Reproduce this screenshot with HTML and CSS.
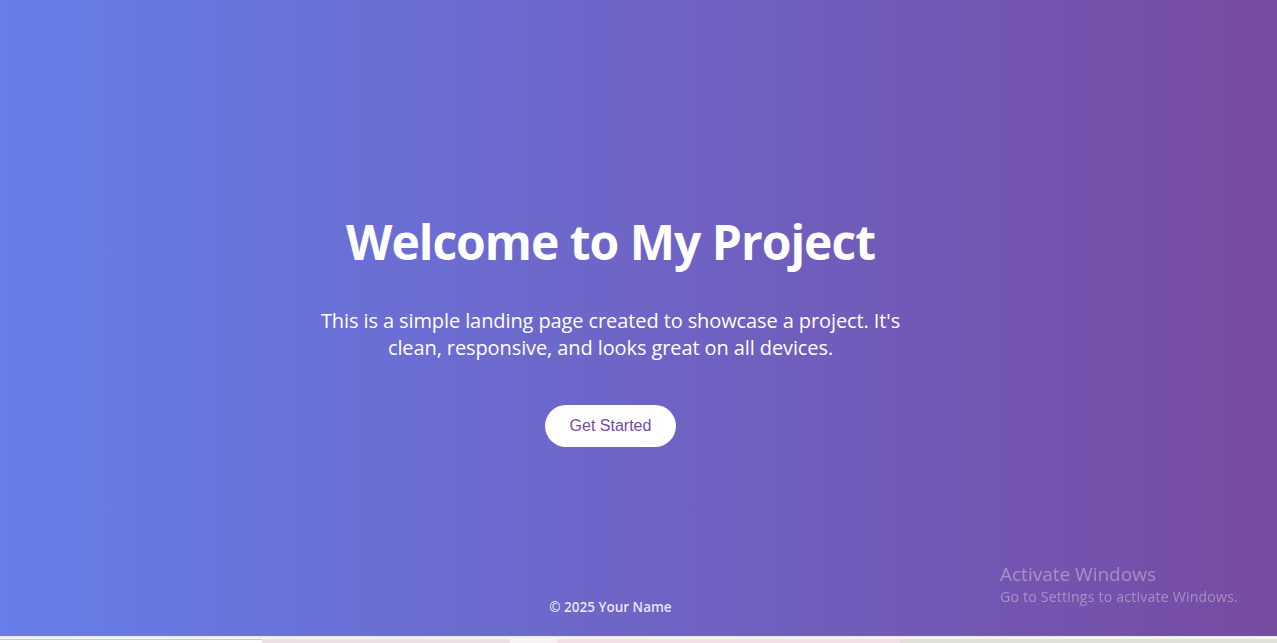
FILE: index.html
```html
<!DOCTYPE html>
<html lang="en">
<head>
<meta charset="utf-8">
<title>My Project</title>
<link rel="stylesheet" href="styles.css">
</head>
<body>
  <div class="page">
    <main class="hero">
      <h1 class="hero-title">Welcome to My Project</h1>
      <p class="hero-text">This is a simple landing page created to showcase a project. It's clean, responsive, and looks great on all devices.</p>
      <a class="hero-btn" href="#">Get Started</a>
    </main>
    <footer class="footer">© 2025 Your Name</footer>
  </div>
  <div class="taskbar">
    <span class="tb-a"></span><span class="tb-b"></span><span class="tb-c"></span><span class="tb-d"></span><span class="tb-e"></span>
  </div>
  <div class="activate">
    <div class="activate-title">Activate Windows</div>
    <div class="activate-sub">Go to Settings to activate Windows.</div>
  </div>
</body>
</html>
```

FILE: styles.css
```css
* { box-sizing: border-box; }
html, body { margin: 0; padding: 0; }
body {
  font-family: "Open Sans", "Noto Sans", sans-serif;
  color: #fff;
  background: #f3f3f3;
  height: 643px;
  overflow: hidden;
}
.page {
  height: 636px;
  background: linear-gradient(to right, #667eea, #764ba2);
  display: flex;
  flex-direction: column;
  padding-right: 56px;
}
.hero {
  flex: 1;
  display: flex;
  flex-direction: column;
  align-items: center;
  justify-content: center;
  text-align: center;
  padding-top: 58px;
}
.hero-title {
  margin: 0 0 33px;
  font-size: 48px;
  font-weight: 700;
  line-height: 64px;
  letter-spacing: -1px;
}
.hero-text {
  margin: 0 0 44px;
  max-width: 600px;
  font-size: 20px;
  line-height: 27px;
  letter-spacing: -0.1px;
}
.hero-btn {
  display: inline-block;
  background: #fff;
  color: #764ba2;
  font-family: "Liberation Sans", Arial, sans-serif;
  font-size: 16px;
  line-height: 18px;
  padding: 12px 25px;
  border-radius: 30px;
  text-decoration: none;
}
.footer {
  text-align: center;
  font-size: 13.5px;
  font-weight: 600;
  color: rgba(255,255,255,0.85);
  padding: 0 0 20px;
}
.taskbar {
  height: 7px;
  border-top: 2px solid #ececec;
  background: #fafafa;
  display: flex;
  align-items: flex-end;
}
.taskbar span { display: block; height: 4px; }
.tb-a { width: 262px; background: #fff; border-top: 1px solid #c8c8c8; }
.tb-b { width: 248px; background: #eedfe2; }
.tb-c { width: 47px; background: #f7f1f3; }
.tb-d { width: 343px; background: #f1e1e6; }
.tb-e { flex: 1; background: #e0dfd8; }
.activate {
  position: fixed;
  left: 1000px;
  top: 562px;
  color: rgba(255,255,255,0.35);
  font-family: "Open Sans", sans-serif;
}
.activate-title { font-size: 19px; line-height: 24px; }
.activate-sub { font-size: 14.1px; line-height: 22px; letter-spacing: 0.2px; }
```
